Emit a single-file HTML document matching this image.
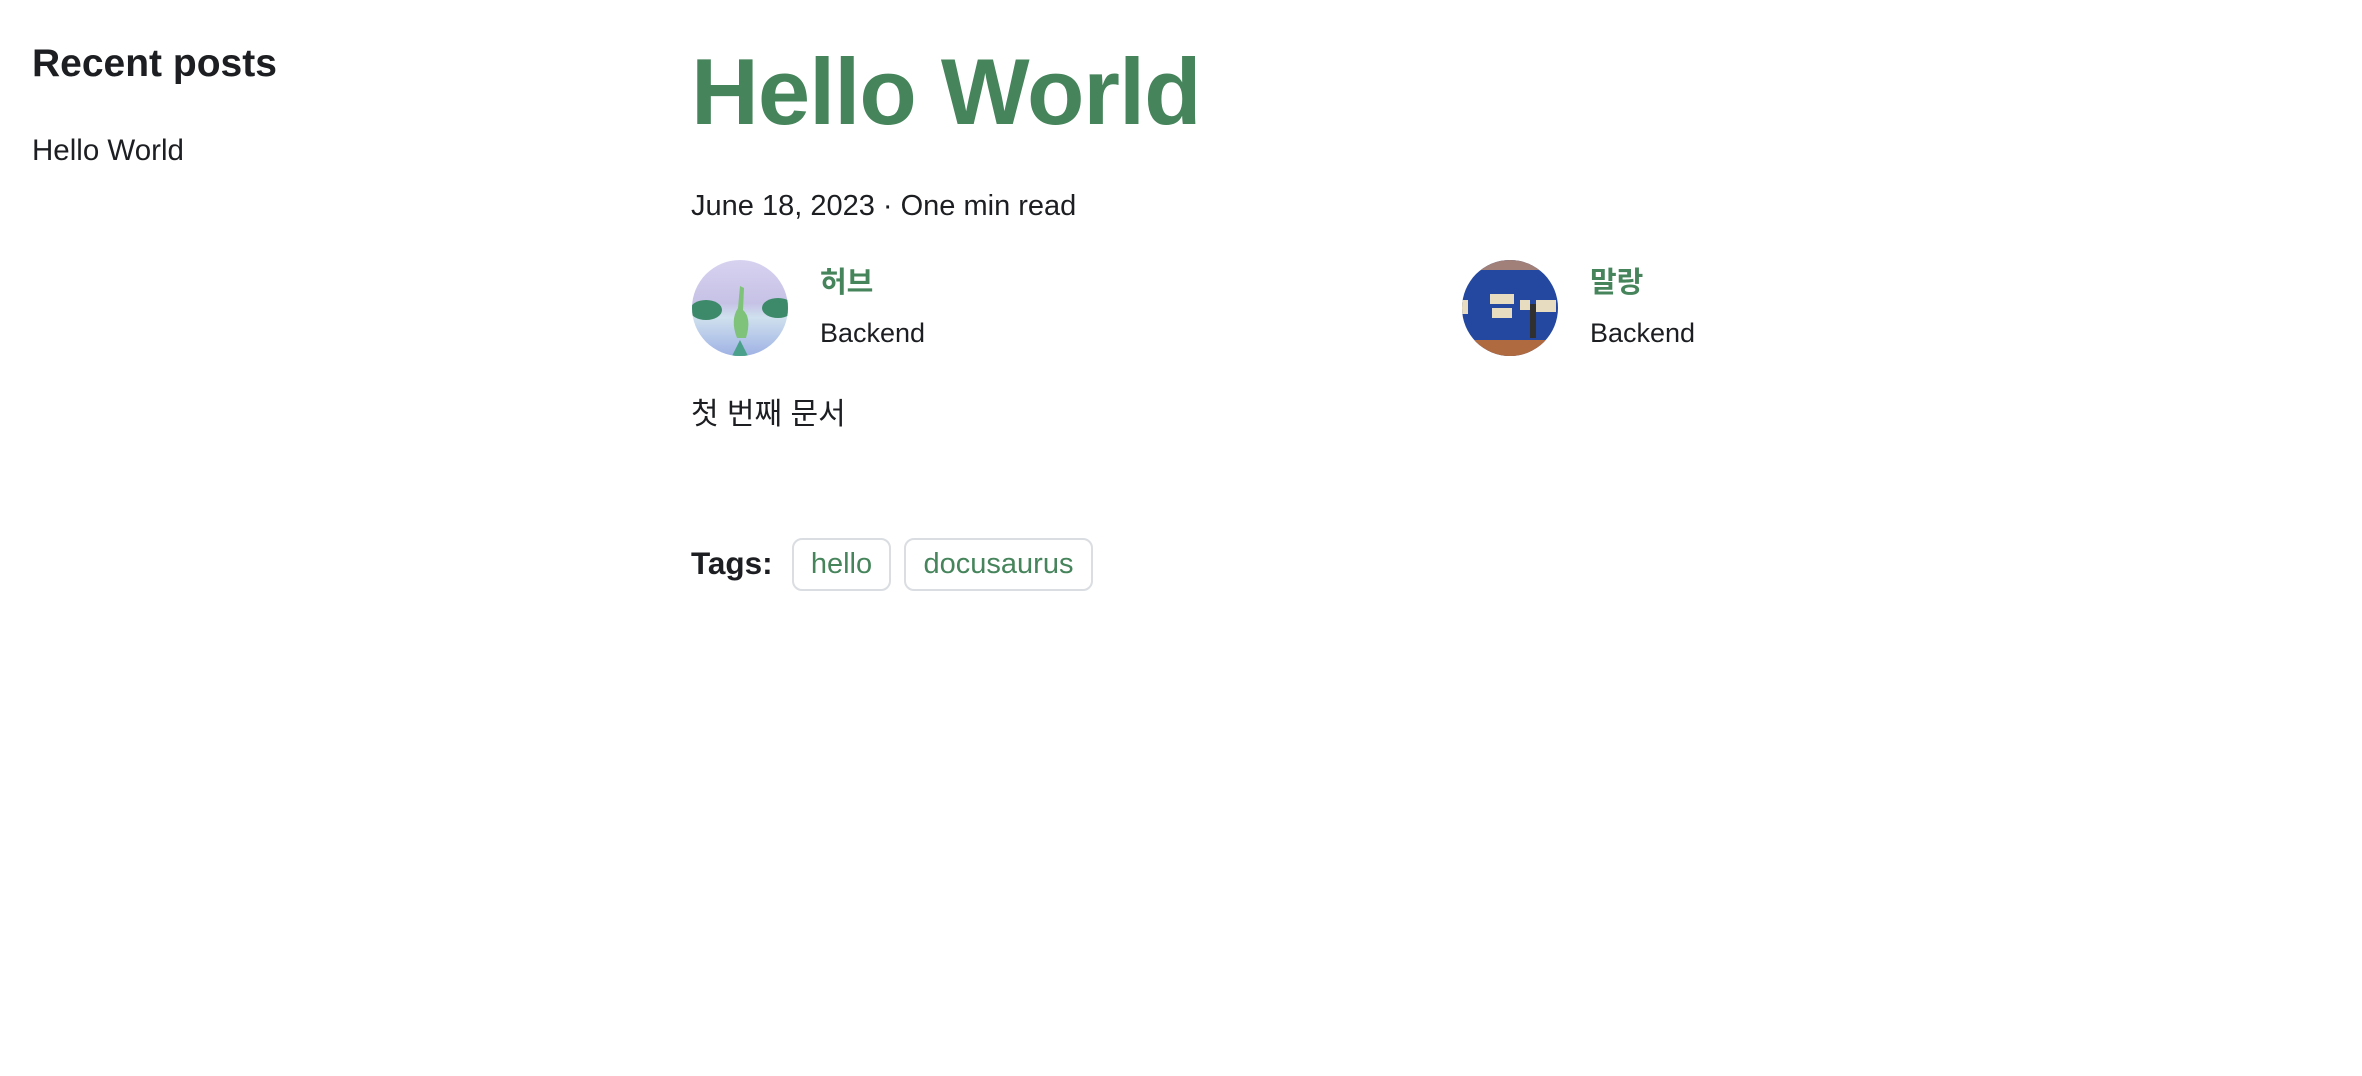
<!DOCTYPE html>
<html><head><meta charset="utf-8"><style>
*{margin:0;padding:0;box-sizing:border-box}
body{width:2362px;height:1076px;background:#fff;color:#1c1e21;font-family:"Liberation Sans","Noto Sans CJK KR",sans-serif;position:relative;overflow:hidden}
.a{position:absolute;white-space:nowrap;line-height:1}
.g{color:#46845b}
.tag{position:absolute;border:2px solid #dadde1;border-radius:10px;color:#46845b;font-size:29px;display:flex;align-items:center;justify-content:center}
.av{position:absolute;width:96px;height:96px;border-radius:50%;overflow:hidden}
</style></head><body>
<div class="a" style="left:32px;top:44px;font-size:39px;font-weight:bold">Recent posts</div>
<div class="a" style="left:32px;top:136px;font-size:29.5px">Hello World</div>

<div class="a g" style="left:691px;top:45px;font-size:94px;font-weight:bold;letter-spacing:-1px">Hello World</div>
<div class="a" style="left:691px;top:192px;font-size:29px">June 18, 2023 · One min read</div>

<div class="av" style="left:692px;top:260px">
<svg width="96" height="96" viewBox="0 0 96 96">
<defs><linearGradient id="s" x1="0" y1="0" x2="0" y2="1"><stop offset="0" stop-color="#d8d2f0"/><stop offset=".45" stop-color="#c6c2e6"/><stop offset=".6" stop-color="#cfe0ee"/><stop offset="1" stop-color="#9fb2e4"/></linearGradient></defs>
<rect width="96" height="96" fill="url(#s)"/>
<ellipse cx="14" cy="50" rx="16" ry="10" fill="#3d8a6a"/>
<ellipse cx="86" cy="48" rx="16" ry="10" fill="#3d8a6a"/>
<path d="M45 78 Q38 60 46 48 L48 26 L52 28 L51 50 Q60 58 54 78 Z" fill="#7fc27a"/>
<path d="M40 96 L48 80 L56 96 Z" fill="#4aa08a"/>
</svg></div>
<div class="a g" style="left:820px;top:269px;font-size:29px;font-weight:bold">허브</div>
<div class="a" style="left:820px;top:320px;font-size:27px">Backend</div>

<div class="av" style="left:1462px;top:260px">
<svg width="96" height="96" viewBox="0 0 96 96">
<rect width="96" height="96" fill="#2448a0"/>
<rect width="96" height="10" fill="#a08078"/>
<rect y="80" width="96" height="16" fill="#b06a40"/>
<rect x="28" y="34" width="24" height="10" fill="#e8dcc0"/>
<rect x="30" y="48" width="20" height="10" fill="#e8dcc0"/>
<rect x="58" y="40" width="10" height="10" fill="#e8dcc0"/>
<rect x="74" y="40" width="20" height="12" fill="#e8dcc0"/>
<rect x="0" y="40" width="6" height="14" fill="#e8dcc0"/>
<rect x="68" y="44" width="6" height="34" fill="#303030"/>
</svg></div>
<div class="a g" style="left:1590px;top:269px;font-size:29px;font-weight:bold">말랑</div>
<div class="a" style="left:1590px;top:320px;font-size:27px">Backend</div>

<div class="a" style="left:691px;top:400px;font-size:30px">첫 번째 문서</div>

<div class="a" style="left:691px;top:548px;font-size:31.5px;font-weight:bold">Tags:</div>
<div class="tag" style="left:792px;top:538px;width:99px;height:53px">hello</div>
<div class="tag" style="left:904px;top:538px;width:189px;height:53px">docusaurus</div>
</body></html>
